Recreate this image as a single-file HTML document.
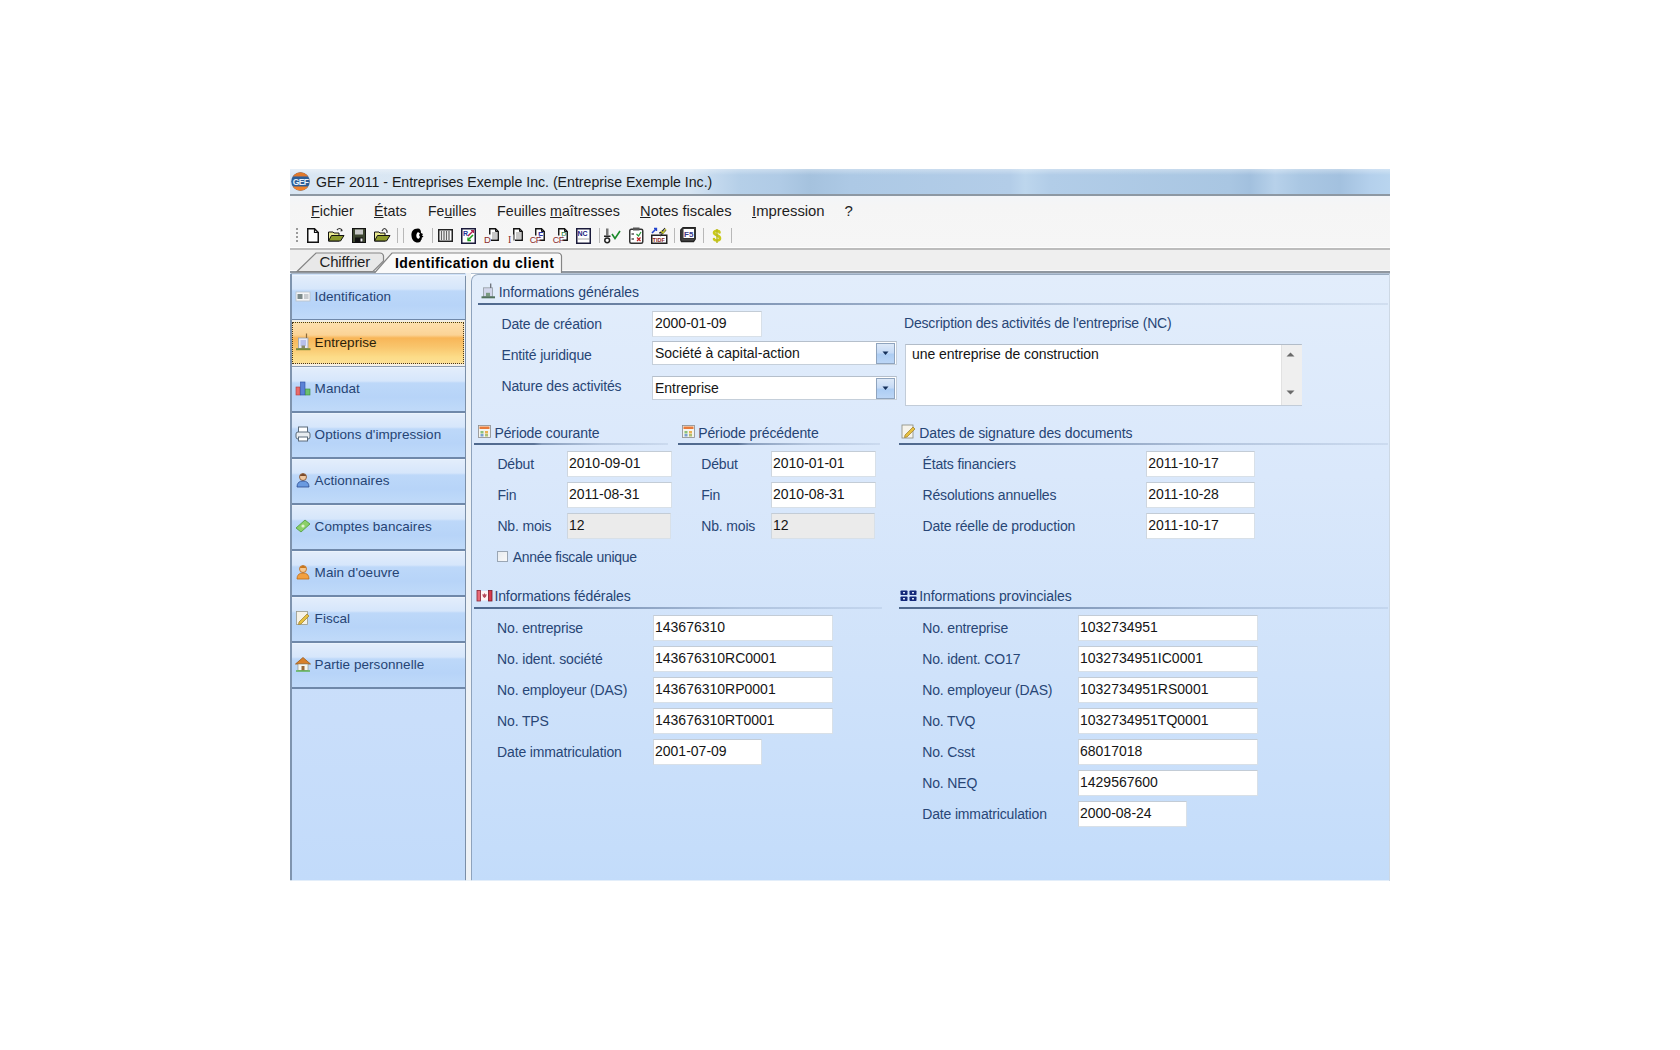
<!DOCTYPE html>
<html><head><meta charset="utf-8"><style>
html,body{margin:0;padding:0;}
body{width:1680px;height:1050px;overflow:hidden;background:#fff;position:relative;font-family:"Liberation Sans",sans-serif;}
.t{position:absolute;white-space:pre;line-height:16px;}
.bx{position:absolute;box-sizing:border-box;}
.a{position:absolute;}
svg{position:absolute;overflow:visible;}
</style></head><body>
<div class="a" style="left:290px;top:169px;width:1100px;height:25px;background:linear-gradient(90deg,#d9e6f3 0px,#dbe8f4 300px,#d6e4f2 400px,#c4d9ee 425px,#b5cfe8 450px,#b0cbe6 490px,#a5c2de 520px,#adc9e5 560px,#b3cde8 720px,#bdd6ed 735px,#b2cde8 760px,#a9c6e2 940px,#a2c0de 960px,#b7d1ea 985px,#aac7e3 1010px,#a3c1df 1050px,#b4d0ec 1080px,#b9d5ef 1100px);"></div><div class="a" style="left:290px;top:169px;width:1100px;height:6px;background:linear-gradient(180deg,rgba(255,255,255,0.35),rgba(255,255,255,0));"></div><div class="a" style="left:290px;top:194px;width:1100px;height:2px;background:#8d98a3;"></div><svg style="left:291px;top:172px" width="19" height="19" viewBox="0 0 19 19">
<defs><clipPath id="cc"><circle cx="9.5" cy="9.5" r="9.3"/></clipPath></defs>
<g clip-path="url(#cc)"><rect x="0" y="0" width="19" height="19" fill="#2b5d96"/><rect x="0" y="0" width="19" height="4.5" fill="#e0782a"/><rect x="0" y="14.5" width="19" height="5" fill="#f08028"/><rect x="0" y="4" width="19" height="1" fill="#7a6a70"/></g>
<text x="9.5" y="12.6" font-family="Liberation Sans" font-weight="bold" font-size="8.5" fill="#e6f0fa" text-anchor="middle" letter-spacing="-0.6">GEF</text>
</svg><div class="t" style="left:316px;top:174.40px;font-size:15px;color:#1b1b1b;font-weight:normal;transform:scaleX(0.942);transform-origin:0 0;">GEF 2011 - Entreprises Exemple Inc. (Entreprise Exemple Inc.)</div><div class="a" style="left:290px;top:196px;width:1100px;height:52px;background:linear-gradient(180deg,#f3f5f8 0px,#f5f5f5 10px,#f6f6f6 52px);"></div><div class="t" style="left:310.5px;top:202.70px;font-size:15px;color:#1e1e1e;font-weight:normal;transform:scaleX(0.95);transform-origin:0 0;"><u>F</u>ichier</div><div class="t" style="left:374.4px;top:202.70px;font-size:15px;color:#1e1e1e;font-weight:normal;transform:scaleX(0.955);transform-origin:0 0;"><u>É</u>tats</div><div class="t" style="left:428px;top:202.70px;font-size:15px;color:#1e1e1e;font-weight:normal;transform:scaleX(0.935);transform-origin:0 0;">Fe<u>u</u>illes</div><div class="t" style="left:497.4px;top:202.70px;font-size:15px;color:#1e1e1e;font-weight:normal;transform:scaleX(0.95);transform-origin:0 0;">Feuilles <u>m</u>aîtresses</div><div class="t" style="left:640.2px;top:202.70px;font-size:15px;color:#1e1e1e;font-weight:normal;transform:scaleX(0.98);transform-origin:0 0;"><u>N</u>otes fiscales</div><div class="t" style="left:751.6px;top:202.70px;font-size:15px;color:#1e1e1e;font-weight:normal;transform:scaleX(0.99);transform-origin:0 0;"><u>I</u>mpression</div><div class="t" style="left:844.4px;top:202.70px;font-size:15px;color:#1e1e1e;font-weight:normal;transform:scaleX(1.0);transform-origin:0 0;">?</div><div class="a" style="left:290px;top:247px;width:1100px;height:1px;background:#fdfdfd;"></div><div class="a" style="left:290px;top:248px;width:1100px;height:2px;background:#bcbcbc;"></div><div class="a" style="left:290px;top:250px;width:1100px;height:21px;background:#efefef;"></div><div class="a" style="left:290px;top:270px;width:1100px;height:1px;background:#fbfbfb;"></div><div class="a" style="left:290px;top:271px;width:1100px;height:2px;background:#90979f;"></div><div class="a" style="left:290px;top:273px;width:1100px;height:1px;background:#b3c1d2;"></div><div class="a" style="left:290px;top:273px;width:176px;height:608px;background:linear-gradient(180deg,#cfe2fa 0px,#c9defa 450px,#c2dbfa 608px);"></div><div class="a" style="left:465px;top:276px;width:1px;height:605px;background:#7b8fa8;"></div><div class="a" style="left:466px;top:273px;width:5px;height:608px;background:#eef2f6;"></div><div class="a" style="left:471px;top:274px;width:919px;height:607px;box-sizing:border-box;border-left:1px solid #8ea3bd;border-top:1px solid #9aabbf;border-top-left-radius:7px;background:linear-gradient(180deg,#e2edfb 0px,#dae8fb 200px,#cfe2fa 400px,#c3dcfa 607px);"></div><div class="a" style="left:296px;top:228px;width:2px;height:2px;background:#9a9a9a;"></div><div class="a" style="left:296px;top:232px;width:2px;height:2px;background:#9a9a9a;"></div><div class="a" style="left:296px;top:236px;width:2px;height:2px;background:#9a9a9a;"></div><div class="a" style="left:296px;top:240px;width:2px;height:2px;background:#9a9a9a;"></div><svg style="left:307px;top:228px" width="12" height="15" viewBox="0 0 12 15"><path d="M0.75 0.75 H7.5 L11.25 4.5 V14.25 H0.75 Z" fill="#fff" stroke="#111" stroke-width="1.5"/><path d="M7.5 0.75 V4.5 H11.25" fill="none" stroke="#111" stroke-width="1.2"/></svg><svg style="left:328px;top:227px" width="17" height="15" viewBox="0 0 17 15"><path d="M0.5 5 H5 L6 6 H11 V14 H0.5 Z" fill="#e8e890" stroke="#111" stroke-width="1"/><path d="M0.5 14 L3.5 8.5 H16 L12.5 14 Z" fill="#8c9a2a" stroke="#111" stroke-width="1"/><path d="M9 3 Q11.5 0 14 3" fill="none" stroke="#333" stroke-width="1.2"/><path d="M13 2 L15 4 L12.5 4.5 Z" fill="#333"/></svg><svg style="left:352px;top:228px" width="14" height="15" viewBox="0 0 14 15"><rect x="0.5" y="0.5" width="13" height="14" fill="#3d4630" stroke="#111"/><rect x="3" y="1.5" width="8" height="5" fill="#c8c8c8"/><rect x="3" y="9.5" width="8" height="5" fill="#111"/><rect x="8.5" y="10.5" width="2" height="3" fill="#eee"/></svg><svg style="left:374px;top:227px" width="17" height="15" viewBox="0 0 17 15"><path d="M0.5 5 H5 L6 6 H11 V14 H0.5 Z" fill="#e8e890" stroke="#111" stroke-width="1"/><path d="M0.5 14 L3.5 8.5 H16 L12.5 14 Z" fill="#8c9a2a" stroke="#111" stroke-width="1"/><path d="M8 4 Q10.5 -1 13 4 L13 6" fill="none" stroke="#333" stroke-width="1.2"/></svg><div class="a" style="left:397px;top:228px;width:1px;height:15px;background:#b8b8b8;"></div><div class="a" style="left:403px;top:228px;width:1px;height:15px;background:#b8b8b8;"></div><div class="a" style="left:432px;top:228px;width:1px;height:15px;background:#b8b8b8;"></div><div class="a" style="left:599px;top:228px;width:1px;height:15px;background:#b8b8b8;"></div><div class="a" style="left:674px;top:228px;width:1px;height:15px;background:#b8b8b8;"></div><div class="a" style="left:703px;top:228px;width:1px;height:15px;background:#b8b8b8;"></div><div class="a" style="left:731px;top:228px;width:1px;height:15px;background:#b8b8b8;"></div><svg style="left:411px;top:228px" width="14" height="15" viewBox="0 0 14 15"><path d="M7 0.5 C2 0.5 0 4 0.5 8 C1 12 3 14.5 7 14.5 C9 14.5 10 13 10 12 L11 11 L10.5 10 L12.5 8.5 L11 7.5 L12 6 L10 5 C10 2 9 0.5 7 0.5 Z" fill="#000"/><path d="M7 4 C5.5 5 5 7 5.5 9 C6 10.5 7 11 8 10.5 L9 9 L8 7 L9 5.5 Z" fill="#fff"/></svg><svg style="left:438px;top:229px" width="15" height="13" viewBox="0 0 15 13"><rect x="0.75" y="0.75" width="13.5" height="11.5" fill="#fff" stroke="#222" stroke-width="1.5"/><path d="M3.5 2 V11 M6 2 V11 M8.5 2 V11 M11 2 V11" stroke="#666" stroke-width="1.3"/></svg><svg style="left:461px;top:228px" width="15" height="16" viewBox="0 0 15 16"><rect x="0.75" y="0.75" width="13.5" height="14.5" fill="#fff" stroke="#1a1a3a" stroke-width="1.5"/><text x="2" y="8" font-family="Liberation Sans" font-weight="bold" font-size="7" fill="#223399">R</text><path d="M7 8 L12 3" stroke="#b02050" stroke-width="1.5"/><path d="M10 2.5 H12.5 V5" fill="none" stroke="#b02050" stroke-width="1.2"/><path d="M12 7 L7 12" stroke="#20a020" stroke-width="1.6"/><path d="M7 9.5 V12.5 H10" fill="none" stroke="#20a020" stroke-width="1.3"/></svg><svg style="left:484px;top:228px" width="16" height="16" viewBox="0 0 16 16"><path d="M5.75 12.5 V0.75 H11.5 L14.25 3.5 V12.25 H7" fill="#fff" stroke="#111" stroke-width="1.4"/><path d="M11.5 0.75 V3.5 H14.25" fill="none" stroke="#111" stroke-width="1"/><rect x="8" y="4" width="5" height="7" fill="#c8c8c8"/><rect x="-0.5" y="6.5" width="7.5" height="9" fill="#f6f6f6"/><text x="0" y="14.8" font-family="Liberation Sans" font-size="9.5" fill="#8a2a2a">D</text></svg><svg style="left:508px;top:228px" width="16" height="16" viewBox="0 0 16 16"><path d="M5.75 12.5 V0.75 H11.5 L14.25 3.5 V12.25 H7" fill="#fff" stroke="#111" stroke-width="1.4"/><path d="M11.5 0.75 V3.5 H14.25" fill="none" stroke="#111" stroke-width="1"/><rect x="8" y="4" width="5" height="7" fill="#c8c8c8"/><rect x="-0.5" y="6.5" width="6" height="9" fill="#f6f6f6"/><text x="0" y="14.8" font-family="Liberation Serif" font-size="10" fill="#8a2a2a">I</text></svg><svg style="left:530px;top:228px" width="16" height="16" viewBox="0 0 16 16"><path d="M5.75 12.5 V0.75 H11.5 L14.25 3.5 V12.25 H7" fill="#fff" stroke="#111" stroke-width="1.4"/><path d="M11.5 0.75 V3.5 H14.25" fill="none" stroke="#111" stroke-width="1"/><text x="8" y="10" font-family="Liberation Sans" font-weight="bold" font-size="8.5" fill="#3030a0">F</text><rect x="-0.5" y="7.5" width="10" height="8" fill="#f6f6f6"/><text x="-0.3" y="15.2" font-family="Liberation Sans" font-size="9" fill="#8a2a2a" letter-spacing="-0.4">CF</text></svg><svg style="left:553px;top:228px" width="16" height="16" viewBox="0 0 16 16"><path d="M5.75 12.5 V0.75 H11.5 L14.25 3.5 V12.25 H7" fill="#fff" stroke="#111" stroke-width="1.4"/><path d="M11.5 0.75 V3.5 H14.25" fill="none" stroke="#111" stroke-width="1"/><text x="8" y="10" font-family="Liberation Sans" font-size="8.5" fill="#2a7a3a">P</text><rect x="-0.5" y="7.5" width="10" height="8" fill="#f6f6f6"/><text x="-0.3" y="15.2" font-family="Liberation Sans" font-size="9" fill="#8a2a2a" letter-spacing="-0.4">CF</text></svg><svg style="left:576px;top:228px" width="15" height="16" viewBox="0 0 15 16"><rect x="0.75" y="0.75" width="13.5" height="14.5" fill="#fff" stroke="#1a1a3a" stroke-width="1.5"/><text x="1.5" y="8" font-family="Liberation Sans" font-weight="bold" font-size="7" fill="#202080">NC</text><path d="M2 11 H13" stroke="#aaa" stroke-width="1"/></svg><svg style="left:604px;top:228px" width="17" height="16" viewBox="0 0 17 16"><rect x="2" y="0.5" width="2.5" height="7" fill="#777"/><rect x="0" y="7.5" width="6.5" height="1.5" fill="#222"/><circle cx="3.2" cy="12.3" r="2.4" fill="#fff" stroke="#222" stroke-width="1.5"/><path d="M8 6 L11 10.5 L16 3" fill="none" stroke="#1a8a2a" stroke-width="1.6"/></svg><svg style="left:629px;top:227px" width="15" height="17" viewBox="0 0 15 17"><rect x="0.75" y="2.25" width="13" height="14" rx="1.5" fill="#fff" stroke="#333" stroke-width="1.5"/><rect x="4" y="0.5" width="6.5" height="3" fill="#555"/><path d="M2.5 7 H5 M2.5 12 H5" stroke="#555" stroke-width="1.3"/><path d="M7.5 7 L9.5 9 L12 5" fill="none" stroke="#2a9a3a" stroke-width="1.2"/><path d="M8 10.5 L11.5 14 M11.5 10.5 L8 14" stroke="#c02020" stroke-width="1.2"/></svg><svg style="left:651px;top:227px" width="17" height="17" viewBox="0 0 17 17"><rect x="0.75" y="8.25" width="15" height="8" fill="#fff" stroke="#222" stroke-width="1.5"/><text x="1.6" y="15" font-family="Liberation Sans" font-weight="bold" font-size="5.5" fill="#8a1a1a">TIDF</text><path d="M1 6 L5 2" stroke="#2244cc" stroke-width="1.6"/><path d="M3 1.5 H5.5 V4" fill="none" stroke="#2244cc" stroke-width="1.3"/><path d="M8 6 H10 L14 1 M9 9 L15 3" stroke="#333" stroke-width="1.2"/><path d="M10 4 L12 6 L15 2" fill="none" stroke="#c8c820" stroke-width="1.2"/></svg><svg style="left:680px;top:227px" width="17" height="16" viewBox="0 0 17 16"><path d="M3 0.75 H15.25 V12 L13.5 14.5 H1.5 L0.75 13 V3 Z" fill="#444" stroke="#222" stroke-width="1.3"/><rect x="3" y="1.5" width="11.5" height="10" fill="#fff" stroke="#333" stroke-width="1"/><text x="4" y="10" font-family="Liberation Sans" font-weight="bold" font-size="8" fill="#3a3a8a">F5</text></svg><svg style="left:712px;top:228px" width="10" height="16" viewBox="0 0 10 16"><path d="M7.5 4.5 C7.5 2.5 2 2 2 4.8 C2 7.5 8 7 8 10.2 C8 13.2 2 13 2 11" fill="none" stroke="#c9c91a" stroke-width="2.6" stroke-linecap="round"/><path d="M5 1 V15" stroke="#b8b820" stroke-width="1.4"/></svg><svg style="left:296px;top:252px" width="92" height="21" viewBox="0 0 92 21"><path d="M1 19.5 L20 1 H84 Q87 1 87.5 4 L87.5 9 L77 19.5 Z" fill="#e8e8e8" stroke="#858585" stroke-width="1.2"/></svg><div class="t" style="left:319.6px;top:254.40px;font-size:15px;color:#1e1e1e;font-weight:normal;letter-spacing:-0.2px;">Chiffrier</div><svg style="left:374px;top:252px" width="190" height="22" viewBox="0 0 190 22"><path d="M0.5 21 L18 1 H184 Q187 1 187.5 4 V21" fill="#fafafa" stroke="#858585" stroke-width="1.2"/></svg><div class="t" style="left:395px;top:254.75px;font-size:14px;color:#000;font-weight:bold;letter-spacing:0.45px;">Identification du client</div><div class="a" style="left:291px;top:273px;width:174px;height:1px;background:#a9b6c6;"></div><div class="a" style="left:291px;top:275px;width:174px;height:44px;background:linear-gradient(180deg,#f0f6fd 0px,#e2edfb 1.5px,#d6e6fb 14px,#bdd8f9 16px,#b7d4f8 30px,#c0daf9 44px);"></div><div class="a" style="left:291px;top:318.5px;width:174px;height:2px;background:#6f88a9;"></div><div class="t" style="left:314.6px;top:288.82px;font-size:13.5px;color:#264474;font-weight:normal;letter-spacing:0.05px;">Identification</div><div class="a" style="left:291px;top:320px;width:174px;height:46px;background:#f4f0e6;"></div><div class="a" style="left:292px;top:322px;width:172px;height:42px;box-sizing:border-box;border:1px dotted #4a3a1a;background:linear-gradient(180deg,#fde0ae 0px,#fbd395 12px,#f8b658 15px,#f9c56c 24px,#fcdc88 34px,#fde39a 43px);"></div><div class="a" style="left:291px;top:366px;width:174px;height:1px;background:#8c9cb1;"></div><div class="t" style="left:314.6px;top:334.82px;font-size:13.5px;color:#2a1e0a;font-weight:normal;letter-spacing:0.05px;">Entreprise</div><div class="a" style="left:291px;top:367px;width:174px;height:44px;background:linear-gradient(180deg,#f0f6fd 0px,#e2edfb 1.5px,#d6e6fb 14px,#bdd8f9 16px,#b7d4f8 30px,#c0daf9 44px);"></div><div class="a" style="left:291px;top:410.5px;width:174px;height:2px;background:#6f88a9;"></div><div class="t" style="left:314.6px;top:380.82px;font-size:13.5px;color:#264474;font-weight:normal;letter-spacing:0.05px;">Mandat</div><div class="a" style="left:291px;top:413px;width:174px;height:44px;background:linear-gradient(180deg,#f0f6fd 0px,#e2edfb 1.5px,#d6e6fb 14px,#bdd8f9 16px,#b7d4f8 30px,#c0daf9 44px);"></div><div class="a" style="left:291px;top:456.5px;width:174px;height:2px;background:#6f88a9;"></div><div class="t" style="left:314.6px;top:426.82px;font-size:13.5px;color:#264474;font-weight:normal;letter-spacing:0.05px;">Options d'impression</div><div class="a" style="left:291px;top:459px;width:174px;height:44px;background:linear-gradient(180deg,#f0f6fd 0px,#e2edfb 1.5px,#d6e6fb 14px,#bdd8f9 16px,#b7d4f8 30px,#c0daf9 44px);"></div><div class="a" style="left:291px;top:502.5px;width:174px;height:2px;background:#6f88a9;"></div><div class="t" style="left:314.6px;top:472.82px;font-size:13.5px;color:#264474;font-weight:normal;letter-spacing:0.05px;">Actionnaires</div><div class="a" style="left:291px;top:505px;width:174px;height:44px;background:linear-gradient(180deg,#f0f6fd 0px,#e2edfb 1.5px,#d6e6fb 14px,#bdd8f9 16px,#b7d4f8 30px,#c0daf9 44px);"></div><div class="a" style="left:291px;top:548.5px;width:174px;height:2px;background:#6f88a9;"></div><div class="t" style="left:314.6px;top:518.82px;font-size:13.5px;color:#264474;font-weight:normal;letter-spacing:0.05px;">Comptes bancaires</div><div class="a" style="left:291px;top:551px;width:174px;height:44px;background:linear-gradient(180deg,#f0f6fd 0px,#e2edfb 1.5px,#d6e6fb 14px,#bdd8f9 16px,#b7d4f8 30px,#c0daf9 44px);"></div><div class="a" style="left:291px;top:594.5px;width:174px;height:2px;background:#6f88a9;"></div><div class="t" style="left:314.6px;top:564.82px;font-size:13.5px;color:#264474;font-weight:normal;letter-spacing:0.05px;">Main d'oeuvre</div><div class="a" style="left:291px;top:597px;width:174px;height:44px;background:linear-gradient(180deg,#f0f6fd 0px,#e2edfb 1.5px,#d6e6fb 14px,#bdd8f9 16px,#b7d4f8 30px,#c0daf9 44px);"></div><div class="a" style="left:291px;top:640.5px;width:174px;height:2px;background:#6f88a9;"></div><div class="t" style="left:314.6px;top:610.82px;font-size:13.5px;color:#264474;font-weight:normal;letter-spacing:0.05px;">Fiscal</div><div class="a" style="left:291px;top:643px;width:174px;height:44px;background:linear-gradient(180deg,#f0f6fd 0px,#e2edfb 1.5px,#d6e6fb 14px,#bdd8f9 16px,#b7d4f8 30px,#c0daf9 44px);"></div><div class="a" style="left:291px;top:686.5px;width:174px;height:2px;background:#6f88a9;"></div><div class="t" style="left:314.6px;top:656.82px;font-size:13.5px;color:#264474;font-weight:normal;letter-spacing:0.05px;">Partie personnelle</div><svg style="left:295px;top:288px" width="16" height="16" viewBox="0 0 16 16"><rect x="1" y="4" width="14" height="9" fill="#f4f6f8" stroke="#b8c0c8" stroke-width="0.8"/><rect x="2.5" y="6" width="5" height="5" fill="#7c8a8a"/><rect x="9" y="6" width="4.5" height="5" fill="#c8ccd0"/></svg><svg style="left:296px;top:333px" width="16" height="18" viewBox="0 0 16 18"><rect x="2.5" y="5" width="9.5" height="10.5" fill="#e6e8f6" stroke="#a0a8b0" stroke-width="0.9"/><rect x="4.5" y="7" width="5.5" height="6" fill="#b8c0ec"/><path d="M10.5 0.5 V5" stroke="#8a6a3a" stroke-width="1.2"/><rect x="5.5" y="12.5" width="3.5" height="3" fill="#8a8a6a"/><rect x="0" y="15.2" width="14.5" height="2" fill="#7a8a3a"/></svg><svg style="left:295px;top:380px" width="16" height="16" viewBox="0 0 16 16"><rect x="1" y="7" width="4" height="8" fill="#e96a6a" stroke="#b03a3a" stroke-width="0.6"/><rect x="5.5" y="2" width="4.5" height="13" fill="#5b82d6" stroke="#2a4aa0" stroke-width="0.6"/><rect x="10.5" y="9" width="4.5" height="6" fill="#6cc06c" stroke="#3a8a3a" stroke-width="0.6"/></svg><svg style="left:295px;top:426px" width="16" height="16" viewBox="0 0 16 16"><rect x="3.5" y="1" width="9" height="6" fill="#fff" stroke="#5a6a7a" stroke-width="1"/><rect x="1" y="6" width="14" height="7" rx="2" fill="#e8ecf0" stroke="#5a6a7a" stroke-width="1"/><rect x="3.5" y="11" width="9" height="4" fill="#fff" stroke="#5a6a7a" stroke-width="1"/></svg><svg style="left:295px;top:472px" width="16" height="16" viewBox="0 0 16 16"><circle cx="8" cy="5" r="3.5" fill="#f0c8a0" stroke="#7a4a2a" stroke-width="0.8"/><path d="M4.5 4 Q8 -0.5 11.5 4 Z" fill="#7a4a2a"/><path d="M2 15 Q2 9 8 9 Q14 9 14 15 Z" fill="#6a9ae0" stroke="#2a4a90" stroke-width="0.8"/></svg><svg style="left:295px;top:518px" width="16" height="16" viewBox="0 0 16 16"><path d="M1 10 L10 2 L15 6 L6 14 Z" fill="#8cd06a" stroke="#4a9a3a" stroke-width="0.8"/><circle cx="8" cy="8" r="1.6" fill="#dff2d0"/></svg><svg style="left:295px;top:564px" width="16" height="16" viewBox="0 0 16 16"><circle cx="8" cy="5" r="3.5" fill="#f6c890" stroke="#b8661a" stroke-width="0.8"/><path d="M4.5 4 Q8 -0.5 11.5 4 Z" fill="#c8761a"/><path d="M2 15 Q2 9 8 9 Q14 9 14 15 Z" fill="#f2a040" stroke="#c06a10" stroke-width="0.8"/></svg><svg style="left:295px;top:610px" width="16" height="16" viewBox="0 0 16 16"><rect x="1.5" y="1.5" width="11" height="13" fill="#f6f2e6" stroke="#9a9a8a" stroke-width="0.8"/><path d="M4 12 L12 4 L14 6 L6 14 L3.5 14.5 Z" fill="#e6c040" stroke="#9a7a2a" stroke-width="0.7"/></svg><svg style="left:295px;top:656px" width="16" height="16" viewBox="0 0 16 16"><path d="M0.5 8 L8 1.5 L15.5 8 Z" fill="#d8802a" stroke="#9a5a1a" stroke-width="0.8"/><rect x="3" y="8" width="10" height="6.5" fill="#f6f6f0" stroke="#8a8a7a" stroke-width="0.6"/><rect x="6.5" y="10" width="3" height="4.5" fill="#9a6a3a"/><path d="M1 15 H15" stroke="#5ab04a" stroke-width="1.4"/></svg><div class="a" style="left:478px;top:303px;width:910px;height:2px;background:linear-gradient(90deg,rgba(70,96,134,0.95) 0px,rgba(70,96,134,0.85) 60px,rgba(66,94,136,0.55) 35%,rgba(66,94,136,0.25) 65%,rgba(66,94,136,0.1) 100%);"></div><svg style="left:481px;top:283px" width="18" height="14" viewBox="0 0 18 14"><rect x="2.5" y="4.8" width="9" height="9" fill="#d2d6ea" stroke="#9aa4ac" stroke-width="0.9"/><path d="M9.7 0.5 V5" stroke="#6a7078" stroke-width="1.3"/><rect x="5" y="9.8" width="4" height="3.5" fill="#7a9a80"/><rect x="0.5" y="13.3" width="13.5" height="2" fill="#52725c"/></svg><div class="t" style="left:498.7px;top:284.25px;font-size:14px;color:#264474;font-weight:normal;letter-spacing:-0.1px;">Informations générales</div><div class="t" style="left:501.5px;top:316.35px;font-size:14px;color:#284676;font-weight:normal;letter-spacing:-0.15px;">Date de création</div><div class="bx" style="left:652px;top:311px;width:110px;height:26px;background:#fff;border:1px solid #d8e0e8;border-top-color:#c3ccd6;border-left-color:#ced6df;"></div><div class="t" style="left:655px;top:314.65px;font-size:14px;color:#151515;font-weight:normal;">2000-01-09</div><div class="t" style="left:501.5px;top:347.35px;font-size:14px;color:#284676;font-weight:normal;letter-spacing:-0.15px;">Entité juridique</div><div class="t" style="left:501.5px;top:378.35px;font-size:14px;color:#284676;font-weight:normal;letter-spacing:-0.15px;">Nature des activités</div><div class="bx" style="left:652px;top:341px;width:245px;height:24px;background:#fff;border:1px solid #c5cfda;border-top-color:#b5bfcb;"></div><div class="t" style="left:655px;top:345.45px;font-size:14px;color:#151515;font-weight:normal;">Société à capital-action</div><div class="bx" style="left:876px;top:343px;width:19px;height:21px;border:1px solid #8fa4be;background:linear-gradient(180deg,#dde9f8 0%,#c6dbf6 45%,#adcdf3 55%,#bcd6f6 100%);"></div><svg style="left:882px;top:351px" width="7" height="5" viewBox="0 0 7 5"><path d="M0.5 0.5 H6.5 L3.5 4 Z" fill="#15305a"/></svg><div class="bx" style="left:652px;top:376px;width:245px;height:24px;background:#fff;border:1px solid #c5cfda;border-top-color:#b5bfcb;"></div><div class="t" style="left:655px;top:380.45px;font-size:14px;color:#151515;font-weight:normal;">Entreprise</div><div class="bx" style="left:876px;top:378px;width:19px;height:21px;border:1px solid #8fa4be;background:linear-gradient(180deg,#dde9f8 0%,#c6dbf6 45%,#adcdf3 55%,#bcd6f6 100%);"></div><svg style="left:882px;top:386px" width="7" height="5" viewBox="0 0 7 5"><path d="M0.5 0.5 H6.5 L3.5 4 Z" fill="#15305a"/></svg><div class="a" style="left:290px;top:274px;width:2px;height:607px;background:#7f94ae;"></div><div class="a" style="left:290px;top:880px;width:1100px;height:1px;background:rgba(235,242,250,0.8);"></div><div class="a" style="left:1389px;top:274px;width:1px;height:607px;background:#cdd8e4;"></div><div class="t" style="left:904px;top:314.65px;font-size:14px;color:#284676;font-weight:normal;letter-spacing:-0.18px;">Description des activités de l'entreprise (NC)</div><div class="bx" style="left:905px;top:344px;width:397px;height:62px;background:#fff;border:1px solid #c2ccd8;border-top-color:#b2bcc8;"></div><div class="a" style="left:1281px;top:345px;width:20px;height:60px;background:#efefef;border-left:1px solid #e2e2e2;"></div><svg style="left:1286px;top:352px" width="9" height="5" viewBox="0 0 9 5"><path d="M0.5 4.5 L4.5 0.5 L8.5 4.5 Z" fill="#6a6a6a"/></svg><svg style="left:1286px;top:390px" width="9" height="5" viewBox="0 0 9 5"><path d="M0.5 0.5 H8.5 L4.5 4.5 Z" fill="#6a6a6a"/></svg><div class="t" style="left:912px;top:346.45px;font-size:14px;color:#151515;font-weight:normal;letter-spacing:-0.05px;">une entreprise de construction</div><div class="a" style="left:474px;top:443px;width:194px;height:2px;background:linear-gradient(90deg,rgba(70,96,134,0.95) 0px,rgba(70,96,134,0.85) 60px,rgba(66,94,136,0.55) 35%,rgba(66,94,136,0.25) 65%,rgba(66,94,136,0.1) 100%);"></div><svg style="left:478px;top:425px" width="18" height="14" viewBox="0 0 18 14"><rect x="0.5" y="0.5" width="12" height="12" fill="#f4f4ee" stroke="#8a8a8a" stroke-width="0.8"/><rect x="1.5" y="1.5" width="10" height="2.5" fill="#e87a3a"/><rect x="2.5" y="6" width="3" height="2.5" fill="#8ac07a"/><rect x="7" y="6" width="3" height="2.5" fill="#e8b050"/><rect x="2.5" y="9" width="3" height="2.5" fill="#7aa0d0"/><rect x="7" y="9" width="3" height="2.5" fill="#b0c070"/></svg><div class="t" style="left:494.4px;top:424.65px;font-size:14px;color:#264474;font-weight:normal;letter-spacing:-0.1px;">Période courante</div><div class="a" style="left:678px;top:443px;width:202px;height:2px;background:linear-gradient(90deg,rgba(70,96,134,0.95) 0px,rgba(70,96,134,0.85) 60px,rgba(66,94,136,0.55) 35%,rgba(66,94,136,0.25) 65%,rgba(66,94,136,0.1) 100%);"></div><svg style="left:682px;top:425px" width="18" height="14" viewBox="0 0 18 14"><rect x="0.5" y="0.5" width="12" height="12" fill="#f4f4ee" stroke="#8a8a8a" stroke-width="0.8"/><rect x="1.5" y="1.5" width="10" height="2.5" fill="#e87a3a"/><rect x="2.5" y="6" width="3" height="2.5" fill="#8ac07a"/><rect x="7" y="6" width="3" height="2.5" fill="#e8b050"/><rect x="2.5" y="9" width="3" height="2.5" fill="#7aa0d0"/><rect x="7" y="9" width="3" height="2.5" fill="#b0c070"/></svg><div class="t" style="left:698.2px;top:424.65px;font-size:14px;color:#264474;font-weight:normal;letter-spacing:-0.1px;">Période précédente</div><div class="a" style="left:899px;top:443px;width:489px;height:2px;background:linear-gradient(90deg,rgba(70,96,134,0.95) 0px,rgba(70,96,134,0.85) 60px,rgba(66,94,136,0.55) 35%,rgba(66,94,136,0.25) 65%,rgba(66,94,136,0.1) 100%);"></div><svg style="left:901px;top:424px" width="18" height="14" viewBox="0 0 18 14"><rect x="1" y="1" width="11" height="13" fill="#f6f4ec" stroke="#8a8a7a" stroke-width="0.8"/><path d="M4 11 L12 3 L14 5 L6 13 L3.5 13.5 Z" fill="#e6c040" stroke="#9a7a2a" stroke-width="0.7"/></svg><div class="t" style="left:919.2px;top:424.65px;font-size:14px;color:#264474;font-weight:normal;letter-spacing:-0.1px;">Dates de signature des documents</div><div class="t" style="left:497.4px;top:456.35px;font-size:14px;color:#284676;font-weight:normal;letter-spacing:-0.15px;">Début</div><div class="bx" style="left:567px;top:451px;width:105px;height:26px;background:#fff;border:1px solid #d8e0e8;border-top-color:#c3ccd6;border-left-color:#ced6df;"></div><div class="t" style="left:569px;top:454.65px;font-size:14px;color:#151515;font-weight:normal;">2010-09-01</div><div class="t" style="left:497.4px;top:487.35px;font-size:14px;color:#284676;font-weight:normal;letter-spacing:-0.15px;">Fin</div><div class="bx" style="left:567px;top:482px;width:105px;height:26px;background:#fff;border:1px solid #d8e0e8;border-top-color:#c3ccd6;border-left-color:#ced6df;"></div><div class="t" style="left:569px;top:485.65px;font-size:14px;color:#151515;font-weight:normal;">2011-08-31</div><div class="t" style="left:497.4px;top:518.35px;font-size:14px;color:#284676;font-weight:normal;letter-spacing:-0.15px;">Nb. mois</div><div class="bx" style="left:567px;top:513px;width:104px;height:26px;background:#ebebeb;border:1px solid #d8e0e8;border-top-color:#c3ccd6;border-left-color:#ced6df;"></div><div class="t" style="left:569px;top:516.65px;font-size:14px;color:#151515;font-weight:normal;">12</div><div class="t" style="left:701.2px;top:456.35px;font-size:14px;color:#284676;font-weight:normal;letter-spacing:-0.15px;">Début</div><div class="bx" style="left:771px;top:451px;width:105px;height:26px;background:#fff;border:1px solid #d8e0e8;border-top-color:#c3ccd6;border-left-color:#ced6df;"></div><div class="t" style="left:773px;top:454.65px;font-size:14px;color:#151515;font-weight:normal;">2010-01-01</div><div class="t" style="left:701.2px;top:487.35px;font-size:14px;color:#284676;font-weight:normal;letter-spacing:-0.15px;">Fin</div><div class="bx" style="left:771px;top:482px;width:105px;height:26px;background:#fff;border:1px solid #d8e0e8;border-top-color:#c3ccd6;border-left-color:#ced6df;"></div><div class="t" style="left:773px;top:485.65px;font-size:14px;color:#151515;font-weight:normal;">2010-08-31</div><div class="t" style="left:701.2px;top:518.35px;font-size:14px;color:#284676;font-weight:normal;letter-spacing:-0.15px;">Nb. mois</div><div class="bx" style="left:771px;top:513px;width:104px;height:26px;background:#ebebeb;border:1px solid #d8e0e8;border-top-color:#c3ccd6;border-left-color:#ced6df;"></div><div class="t" style="left:773px;top:516.65px;font-size:14px;color:#151515;font-weight:normal;">12</div><div class="t" style="left:922.5px;top:456.35px;font-size:14px;color:#284676;font-weight:normal;letter-spacing:-0.15px;">États financiers</div><div class="bx" style="left:1146px;top:451px;width:109px;height:26px;background:#fff;border:1px solid #d8e0e8;border-top-color:#c3ccd6;border-left-color:#ced6df;"></div><div class="t" style="left:1148.3px;top:454.65px;font-size:14px;color:#151515;font-weight:normal;">2011-10-17</div><div class="t" style="left:922.5px;top:487.35px;font-size:14px;color:#284676;font-weight:normal;letter-spacing:-0.15px;">Résolutions annuelles</div><div class="bx" style="left:1146px;top:482px;width:109px;height:26px;background:#fff;border:1px solid #d8e0e8;border-top-color:#c3ccd6;border-left-color:#ced6df;"></div><div class="t" style="left:1148.3px;top:485.65px;font-size:14px;color:#151515;font-weight:normal;">2011-10-28</div><div class="t" style="left:922.5px;top:518.35px;font-size:14px;color:#284676;font-weight:normal;letter-spacing:-0.15px;">Date réelle de production</div><div class="bx" style="left:1146px;top:513px;width:109px;height:26px;background:#fff;border:1px solid #d8e0e8;border-top-color:#c3ccd6;border-left-color:#ced6df;"></div><div class="t" style="left:1148.3px;top:516.65px;font-size:14px;color:#151515;font-weight:normal;">2011-10-17</div><div class="bx" style="left:497px;top:551px;width:11px;height:11px;border:1px solid #9aa6b4;background:linear-gradient(135deg,#e8ecf0,#f8f8f8);"></div><div class="t" style="left:512.7px;top:549.15px;font-size:14px;color:#284676;font-weight:normal;letter-spacing:-0.3px;">Année fiscale unique</div><div class="a" style="left:474px;top:607px;width:408px;height:2px;background:linear-gradient(90deg,rgba(70,96,134,0.95) 0px,rgba(70,96,134,0.85) 60px,rgba(66,94,136,0.55) 35%,rgba(66,94,136,0.25) 65%,rgba(66,94,136,0.1) 100%);"></div><svg style="left:476px;top:589px" width="18" height="14" viewBox="0 0 18 14"><rect x="4.5" y="2" width="8" height="9.5" fill="#fff4f4"/><rect x="1" y="1.5" width="3.5" height="10.5" fill="#e86a78" stroke="#8a2434" stroke-width="0.8"/><rect x="12.5" y="1.5" width="3.5" height="10.5" fill="#d83a4a" stroke="#7a1a2a" stroke-width="0.8"/><path d="M8.5 4 L9.3 5.5 L10.8 5.2 L10 7.8 L8.5 9 L7 7.8 L6.2 5.2 L7.7 5.5 Z" fill="#b84a5a"/></svg><div class="t" style="left:494.4px;top:588.45px;font-size:14px;color:#264474;font-weight:normal;letter-spacing:-0.1px;">Informations fédérales</div><div class="t" style="left:497.1px;top:620.35px;font-size:14px;color:#284676;font-weight:normal;letter-spacing:-0.15px;">No. entreprise</div><div class="bx" style="left:653px;top:615px;width:180px;height:26px;background:#fff;border:1px solid #d8e0e8;border-top-color:#c3ccd6;border-left-color:#ced6df;"></div><div class="t" style="left:655px;top:618.65px;font-size:14px;color:#151515;font-weight:normal;">143676310</div><div class="t" style="left:497.1px;top:651.35px;font-size:14px;color:#284676;font-weight:normal;letter-spacing:-0.15px;">No. ident. société</div><div class="bx" style="left:653px;top:646px;width:180px;height:26px;background:#fff;border:1px solid #d8e0e8;border-top-color:#c3ccd6;border-left-color:#ced6df;"></div><div class="t" style="left:655px;top:649.65px;font-size:14px;color:#151515;font-weight:normal;">143676310RC0001</div><div class="t" style="left:497.1px;top:682.35px;font-size:14px;color:#284676;font-weight:normal;letter-spacing:-0.15px;">No. employeur (DAS)</div><div class="bx" style="left:653px;top:677px;width:180px;height:26px;background:#fff;border:1px solid #d8e0e8;border-top-color:#c3ccd6;border-left-color:#ced6df;"></div><div class="t" style="left:655px;top:680.65px;font-size:14px;color:#151515;font-weight:normal;">143676310RP0001</div><div class="t" style="left:497.1px;top:713.35px;font-size:14px;color:#284676;font-weight:normal;letter-spacing:-0.15px;">No. TPS</div><div class="bx" style="left:653px;top:708px;width:180px;height:26px;background:#fff;border:1px solid #d8e0e8;border-top-color:#c3ccd6;border-left-color:#ced6df;"></div><div class="t" style="left:655px;top:711.65px;font-size:14px;color:#151515;font-weight:normal;">143676310RT0001</div><div class="t" style="left:497.1px;top:744.35px;font-size:14px;color:#284676;font-weight:normal;letter-spacing:-0.15px;">Date immatriculation</div><div class="bx" style="left:653px;top:739px;width:109px;height:26px;background:#fff;border:1px solid #d8e0e8;border-top-color:#c3ccd6;border-left-color:#ced6df;"></div><div class="t" style="left:655px;top:742.65px;font-size:14px;color:#151515;font-weight:normal;">2001-07-09</div><div class="a" style="left:899px;top:607px;width:489px;height:2px;background:linear-gradient(90deg,rgba(70,96,134,0.95) 0px,rgba(70,96,134,0.85) 60px,rgba(66,94,136,0.55) 35%,rgba(66,94,136,0.25) 65%,rgba(66,94,136,0.1) 100%);"></div><svg style="left:900px;top:589px" width="18" height="14" viewBox="0 0 18 14"><rect x="0.5" y="1.5" width="7" height="4.5" rx="0.8" fill="#13287a"/><rect x="9.5" y="1.5" width="7" height="4.5" rx="0.8" fill="#13287a"/><rect x="0.5" y="7.5" width="7" height="4.5" rx="0.8" fill="#13287a"/><rect x="9.5" y="7.5" width="7" height="4.5" rx="0.8" fill="#13287a"/><rect x="3" y="3" width="2" height="1.5" fill="#dfe6f5"/><rect x="12" y="3" width="2" height="1.5" fill="#dfe6f5"/><rect x="3" y="9" width="2" height="1.5" fill="#dfe6f5"/><rect x="12" y="9" width="2" height="1.5" fill="#dfe6f5"/></svg><div class="t" style="left:919.3px;top:588.45px;font-size:14px;color:#264474;font-weight:normal;letter-spacing:-0.1px;">Informations provinciales</div><div class="t" style="left:922.2px;top:620.35px;font-size:14px;color:#284676;font-weight:normal;letter-spacing:-0.15px;">No. entreprise</div><div class="bx" style="left:1078px;top:615px;width:180px;height:26px;background:#fff;border:1px solid #d8e0e8;border-top-color:#c3ccd6;border-left-color:#ced6df;"></div><div class="t" style="left:1080px;top:618.65px;font-size:14px;color:#151515;font-weight:normal;">1032734951</div><div class="t" style="left:922.2px;top:651.35px;font-size:14px;color:#284676;font-weight:normal;letter-spacing:-0.15px;">No. ident. CO17</div><div class="bx" style="left:1078px;top:646px;width:180px;height:26px;background:#fff;border:1px solid #d8e0e8;border-top-color:#c3ccd6;border-left-color:#ced6df;"></div><div class="t" style="left:1080px;top:649.65px;font-size:14px;color:#151515;font-weight:normal;">1032734951IC0001</div><div class="t" style="left:922.2px;top:682.35px;font-size:14px;color:#284676;font-weight:normal;letter-spacing:-0.15px;">No. employeur (DAS)</div><div class="bx" style="left:1078px;top:677px;width:180px;height:26px;background:#fff;border:1px solid #d8e0e8;border-top-color:#c3ccd6;border-left-color:#ced6df;"></div><div class="t" style="left:1080px;top:680.65px;font-size:14px;color:#151515;font-weight:normal;">1032734951RS0001</div><div class="t" style="left:922.2px;top:713.35px;font-size:14px;color:#284676;font-weight:normal;letter-spacing:-0.15px;">No. TVQ</div><div class="bx" style="left:1078px;top:708px;width:180px;height:26px;background:#fff;border:1px solid #d8e0e8;border-top-color:#c3ccd6;border-left-color:#ced6df;"></div><div class="t" style="left:1080px;top:711.65px;font-size:14px;color:#151515;font-weight:normal;">1032734951TQ0001</div><div class="t" style="left:922.2px;top:744.35px;font-size:14px;color:#284676;font-weight:normal;letter-spacing:-0.15px;">No. Csst</div><div class="bx" style="left:1078px;top:739px;width:180px;height:26px;background:#fff;border:1px solid #d8e0e8;border-top-color:#c3ccd6;border-left-color:#ced6df;"></div><div class="t" style="left:1080px;top:742.65px;font-size:14px;color:#151515;font-weight:normal;">68017018</div><div class="t" style="left:922.2px;top:775.35px;font-size:14px;color:#284676;font-weight:normal;letter-spacing:-0.15px;">No. NEQ</div><div class="bx" style="left:1078px;top:770px;width:180px;height:26px;background:#fff;border:1px solid #d8e0e8;border-top-color:#c3ccd6;border-left-color:#ced6df;"></div><div class="t" style="left:1080px;top:773.65px;font-size:14px;color:#151515;font-weight:normal;">1429567600</div><div class="t" style="left:922.2px;top:806.35px;font-size:14px;color:#284676;font-weight:normal;letter-spacing:-0.15px;">Date immatriculation</div><div class="bx" style="left:1078px;top:801px;width:109px;height:26px;background:#fff;border:1px solid #d8e0e8;border-top-color:#c3ccd6;border-left-color:#ced6df;"></div><div class="t" style="left:1080px;top:804.65px;font-size:14px;color:#151515;font-weight:normal;">2000-08-24</div></body></html>
